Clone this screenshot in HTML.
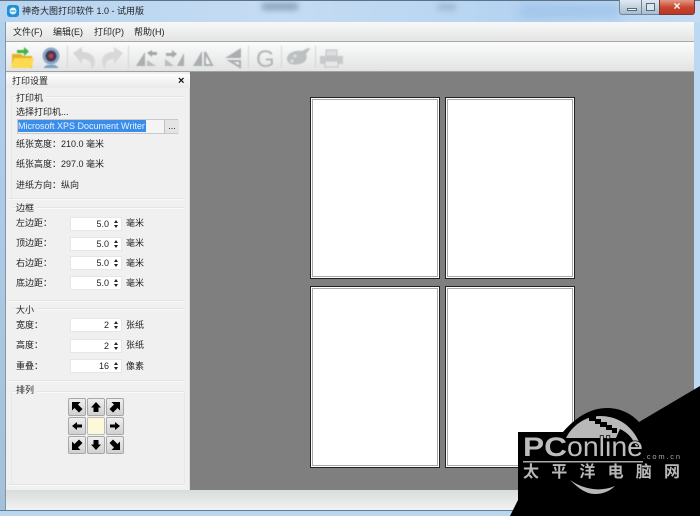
<!DOCTYPE html>
<html><head><meta charset="utf-8"><style>
html,body{margin:0;padding:0}
body{width:700px;height:516px;position:relative;overflow:hidden;background:#b9d7f2;font-family:"Liberation Sans","Noto Sans CJK SC",sans-serif;font-size:9px;color:#222}
.a{position:absolute;white-space:nowrap}
.l{position:absolute;white-space:nowrap;line-height:13px;font-size:9px}
.t{background:#f0f0f0;padding-right:3px}
.p{position:absolute;width:128px;height:180px;background:#fff;border:1px solid #222}
.p:after{content:"";position:absolute;left:1px;top:1px;right:1px;bottom:1px;border:1px solid #a8a8a8}
.sp{position:absolute;left:70px;width:52px;height:14px;background:#fff;border:1px solid #e6e6e6;box-sizing:border-box;text-align:right;padding-right:12px;line-height:12px;font-size:9px}
.sp:after{content:"";position:absolute;right:3px;top:2px;width:0;height:0;border-left:2px solid transparent;border-right:2px solid transparent;border-bottom:3px solid #222}
.sp:before{content:"";position:absolute;right:3px;top:7px;width:0;height:0;border-left:2px solid transparent;border-right:2px solid transparent;border-top:3px solid #222}
.hr{position:absolute;height:1px;background:#e4e4e4;box-shadow:0 1px 0 #f9f9f9}
.b{position:absolute;width:18px;height:18px;box-sizing:border-box;background:linear-gradient(#efefef,#d0d0d0);border:1px solid #a8a8a8;border-radius:2px}
.b svg{position:absolute;left:1px;top:1px}
</style></head><body>
<div class="a" style="left:0;top:0;width:700px;height:22px;background:linear-gradient(90deg,#b7d4ef,#c5dcf3 40%,#b4d3f1 75%,#c4dcf4);"></div>
<div class="a" style="left:262px;top:3px;width:36px;height:7px;background:#8aa4bd;filter:blur(3px)"></div>
<div class="a" style="left:438px;top:4px;width:18px;height:6px;background:#9db6cd;filter:blur(3px)"></div>
<div class="a" style="left:520px;top:4px;width:100px;height:14px;background:#a2c5ea;filter:blur(5px)"></div>
<div class="a" style="left:0;top:0;width:700px;height:1px;background:#5c7286"></div>
<div class="a" style="left:0;top:22px;width:6px;height:494px;background:linear-gradient(#b3d0ec,#a5c0d8)"></div>
<div class="a" style="left:5px;top:22px;width:1px;height:489px;background:#7f97ad"></div>
<div class="a" style="left:694px;top:22px;width:6px;height:494px;background:#bcd8f3"></div>
<div class="a" style="left:0;top:510px;width:700px;height:6px;background:#bcd6ee;border-top:1px solid #5f7e99;box-sizing:border-box"></div>
<svg class="a" style="left:6px;top:4px" width="14" height="14"><rect x="1" y="1" width="12" height="12" rx="3" fill="#1f8fd8"/><circle cx="7" cy="7" r="3.5" fill="#dff2fc"/><rect x="4.5" y="6.5" width="5" height="1" fill="#1f8fd8"/></svg>
<div class="a" style="left:22px;top:4px;font-size:9px;line-height:14px;color:#222">神奇大图打印软件 1.0 - 试用版</div>
<div class="a" style="left:619px;top:0;width:23px;height:15px;background:linear-gradient(#dfe9f3,#a9bccd);border:1px solid #70849a;border-top:0;border-radius:0 0 0 3px;box-sizing:border-box"><div class="a" style="left:7px;top:8px;width:10px;height:3px;background:#f4f7fa;border:1px solid #56687a;box-sizing:border-box"></div></div>
<div class="a" style="left:642px;top:0;width:17px;height:15px;background:linear-gradient(#dfe9f3,#a9bccd);border-bottom:1px solid #70849a;box-sizing:border-box"><div class="a" style="left:4px;top:3px;width:9px;height:8px;border:1px solid #56687a;box-sizing:border-box;background:#dce6ef"></div></div>
<div class="a" style="left:659px;top:0;width:36px;height:15px;background:linear-gradient(#e09a88,#c9422c 55%,#b93a28);border:1px solid #7a3a30;border-top:0;border-radius:0 0 3px 0;box-sizing:border-box;color:#fff;font-weight:bold;font-size:12px;line-height:12px;text-align:center">×</div>

<div class="a" style="left:6px;top:22px;width:688px;height:20px;background:linear-gradient(#f8f8f8,#e3e4e4);border-bottom:1px solid #a8a8a8;box-sizing:border-box"></div>
<div class="l" style="left:13px;top:26px">文件(F)</div>
<div class="l" style="left:53px;top:26px">编辑(E)</div>
<div class="l" style="left:94px;top:26px">打印(P)</div>
<div class="l" style="left:134px;top:26px">帮助(H)</div>
<div class="a" style="left:6px;top:42px;width:688px;height:30px;background:linear-gradient(#fbfbfb,#e2e3e3);border-bottom:1px solid #a0a0a0;box-sizing:border-box"></div>

<svg class="a" style="left:0;top:42px;filter:blur(.4px)" width="350" height="30">
<path d="M12 12h9l2 2h9v12H12z" fill="#e4b024"/>
<path d="M11 26l3-10h20l-3 10z" fill="#fcd94e"/>
<path d="M17 8h7V5l5 4.500-5 4.500v-3h-7z" fill="#3fb23f"/>
<circle cx="51" cy="14" r="8.500" fill="#86a6cb"/><circle cx="51" cy="14" r="5.500" fill="#4a3848"/><circle cx="51" cy="14" r="2.500" fill="#b0405a"/>
<path d="M47 23h8l3 2v1H44v-1z" fill="#7a9dc6"/>
<rect x="67" y="4" width="1" height="22" fill="#d4d4d4"/>
<path d="M73 11l9-6v5c8 0 13 4 13 10 0 3-2 5-4 7 1-6-1-10-9-10v5z" fill="#d6d6d6"/>
<path d="M123 11l-9-6v5c-8 0-12 4-12 10 0 3 2 5 4 7-1-6 1-10 8-10v5z" fill="#d8d8d8"/>
<rect x="128" y="4" width="1" height="22" fill="#d4d4d4"/>
<path d="M136 24l9-14v14z" fill="#a9aeb0"/><path d="M147 11l5-3v2h5v3h-5v2z" fill="#a0a5a7"/><path d="M147 24v-6l9 6z" fill="#b8bcbe"/>
<path d="M165 17l9 7h-9z" fill="#b8bcbe"/><path d="M166 11h6v-3l5 4-5 4v-2h-6z" fill="#a4a9ab"/><path d="M177 24l7-13v13z" fill="#a9aeb0"/>
<path d="M202 24V9l-9 15z" fill="#a9aeb0"/><path d="M205 10v13h7z" fill="#f6f6f6" stroke="#a9aeb0" stroke-width="2"/>
<path d="M241 6l-16 10h16z" fill="#a9aeb0"/><path d="M240 19v6l-10-6z" fill="#f4f4f4" stroke="#a9aeb0" stroke-width="2"/>
<rect x="248" y="4" width="1" height="22" fill="#d4d4d4"/>
<rect x="281" y="4" width="1" height="22" fill="#d4d4d4"/>
<path d="M287 17c0-6 8-9 15-8 5-3 9-4 8-2l-4 5c2 4 0 9-7 10-7 2-12-1-12-5z" fill="#bcc0c2"/>
<circle cx="295" cy="14" r="1.600" fill="#dedede"/><circle cx="292" cy="19" r="1.600" fill="#dedede"/>
<rect x="315" y="4" width="1" height="22" fill="#d4d4d4"/>
<path d="M326 8h11v6h-11z" fill="#dcdedf" stroke="#c2c5c6"/><path d="M320 14h23v8h-23z" fill="#c6cacb"/><path d="M325 19h13v6h-13z" fill="#e6e8e8" stroke="#c2c5c6"/>
<text x="256" y="25" font-family="Liberation Sans" font-size="24" fill="#b2b5b7">G</text>
</svg>

<div class="a" style="left:190px;top:72px;width:504px;height:418px;background:#7f7f7f"></div>
<div class="a" style="left:6px;top:72px;width:184px;height:418px;background:#f0f0f0;border-right:1px solid #ddd;box-sizing:border-box"></div>
<div class="a" style="left:6px;top:490px;width:688px;height:20px;background:linear-gradient(#d9dcdc,#f1f2f2)"></div>

<div class="a" style="left:6px;top:74px;width:184px;height:14px;background:linear-gradient(#fdfdfd,#eaeaea)"></div>
<div class="l" style="left:12px;top:75px">打印设置</div>
<div class="a" style="left:178px;top:74px;line-height:14px;font-size:11px;font-weight:bold;color:#111">×</div>

<div class="hr" style="left:12px;top:96px;width:172px"></div>
<div class="a" style="left:11px;top:96px;width:1px;height:102px;background:#e8e8e8"></div>
<div class="l t" style="left:16px;top:92px">打印机</div>
<div class="l" style="left:16px;top:106px">选择打印机...</div>
<div class="a" style="left:17px;top:119px;width:161px;height:15px;background:#f4f4f4;border:1px solid #c8c8c8;box-sizing:border-box"></div>
<div class="a" style="left:18px;top:120px;width:128px;height:12px;background:#3a8de8;color:#e8f2ff;line-height:12px;font-size:9px;overflow:hidden">Microsoft XPS Document Writer</div>
<div class="a" style="left:164px;top:120px;width:14px;height:13px;background:#e4e4e4;border-left:1px solid #c0c0c0;line-height:13px;text-align:center;font-size:9px">...</div>
<div class="l" style="left:16px;top:138px">纸张宽度：210.0 毫米</div>
<div class="l" style="left:16px;top:158px">纸张高度：297.0 毫米</div>
<div class="l" style="left:16px;top:179px">进纸方向：纵向</div>
<div class="hr" style="left:8px;top:198px;width:176px"></div>

<div class="hr" style="left:12px;top:207px;width:172px"></div>
<div class="l t" style="left:16px;top:202px">边框</div>
<div class="l" style="left:16px;top:217px">左边距：</div><div class="sp" style="top:217px">5.0</div><div class="l" style="left:126px;top:217px">毫米</div>
<div class="l" style="left:16px;top:237px">顶边距：</div><div class="sp" style="top:237px">5.0</div><div class="l" style="left:126px;top:237px">毫米</div>
<div class="l" style="left:16px;top:257px">右边距：</div><div class="sp" style="top:256px">5.0</div><div class="l" style="left:126px;top:257px">毫米</div>
<div class="l" style="left:16px;top:277px">底边距：</div><div class="sp" style="top:276px">5.0</div><div class="l" style="left:126px;top:277px">毫米</div>
<div class="hr" style="left:8px;top:300px;width:176px"></div>

<div class="hr" style="left:12px;top:308px;width:172px"></div>
<div class="l t" style="left:16px;top:304px">大小</div>
<div class="l" style="left:16px;top:319px">宽度：</div><div class="sp" style="top:318px">2</div><div class="l" style="left:126px;top:319px">张纸</div>
<div class="l" style="left:16px;top:339px">高度：</div><div class="sp" style="top:339px">2</div><div class="l" style="left:126px;top:339px">张纸</div>
<div class="l" style="left:16px;top:360px">重叠：</div><div class="sp" style="top:359px">16</div><div class="l" style="left:126px;top:360px">像素</div>
<div class="hr" style="left:8px;top:380px;width:176px"></div>

<div class="hr" style="left:12px;top:391px;width:172px"></div>
<div class="l t" style="left:16px;top:384px">排列</div>
<div class="a" style="left:11px;top:391px;width:1px;height:93px;background:#e8e8e8"></div>
<div class="a" style="left:184px;top:391px;width:1px;height:93px;background:#e8e8e8"></div>
<div class="hr" style="left:8px;top:484px;width:177px"></div>

<div class="b" style="left:68px;top:398px"><svg width="14" height="14"><path d="M2 2H10.500L8 4.500 12.500 9 9 12.500 4.500 8 2 10.500z"/></svg></div>
<div class="b" style="left:87px;top:398px"><svg width="14" height="14"><path d="M7 2l5 5.500H9.500V12h-5V7.500H2z"/></svg></div>
<div class="b" style="left:106px;top:398px"><svg width="14" height="14"><path transform="rotate(90 7 7)" d="M2 2H10.500L8 4.500 12.500 9 9 12.500 4.500 8 2 10.500z"/></svg></div>
<div class="b" style="left:68px;top:417px"><svg width="14" height="14"><path d="M2 7l5-4v2.500h5v3H7V11z"/></svg></div>
<div class="b" style="left:87px;top:417px;background:#fdf8d8;border-color:#bbb"></div>
<div class="b" style="left:106px;top:417px"><svg width="14" height="14"><path d="M12 7L7 3v2.500H2v3h5V11z"/></svg></div>
<div class="b" style="left:68px;top:436px"><svg width="14" height="14"><path transform="rotate(-90 7 7)" d="M2 2H10.500L8 4.500 12.500 9 9 12.500 4.500 8 2 10.500z"/></svg></div>
<div class="b" style="left:87px;top:436px"><svg width="14" height="14"><path d="M7 12L2 6.500h2.500V2h5v4.500H12z"/></svg></div>
<div class="b" style="left:106px;top:436px"><svg width="14" height="14"><path transform="rotate(180 7 7)" d="M2 2H10.500L8 4.500 12.500 9 9 12.500 4.500 8 2 10.500z"/></svg></div>

<div class="p" style="left:310px;top:97px"></div>
<div class="p" style="left:445px;top:97px"></div>
<div class="p" style="left:310px;top:286px"></div>
<div class="p" style="left:445px;top:286px"></div>

<svg class="a" style="left:500px;top:380px" width="200" height="136">
<path d="M200 6L139 42C130 32 118 28 107 28 90 28 75 38 63 52H18V120L10 136H200z" fill="#000"/>
<path d="M66 58C73 44 87 36 100 36 118 36 134 46 141 67H136C133 58 128 53 120 49L116 58Z" fill="#b8b8b8"/>
<path d="M89 36h7v3h5v3h6v3h5v3h5v5h-5v-3h-6v-3h-6v-3h-5v-3h-6z" fill="#000"/>
<path d="M70 100C78 108 86 114 95 114 103 114 110 111 115 106 108 109 100 110 93 109 85 108 77 105 70 100Z" fill="#b8b8b8"/>
<rect x="23" y="81" width="120" height="1.500" fill="#aaa"/>
<text x="23" y="76" font-family="Liberation Sans" font-size="27" font-weight="bold" fill="#bdbdbd" stroke="#000" stroke-width="1.500" paint-order="stroke" textLength="44" lengthAdjust="spacingAndGlyphs">PC</text>
<text x="67" y="76" font-family="Liberation Sans" font-size="28" fill="#bdbdbd" stroke="#000" stroke-width="1.500" paint-order="stroke" textLength="76" lengthAdjust="spacingAndGlyphs">online</text>
<text x="143" y="79" font-family="Liberation Sans" font-size="7.500" fill="#aaa" textLength="37">.com.cn</text>
<text x="23" y="97" font-family="Noto Sans CJK SC" font-size="16" font-weight="bold" fill="#b8b8b8" textLength="157">太平洋电脑网</text>
</svg>
</body></html>
